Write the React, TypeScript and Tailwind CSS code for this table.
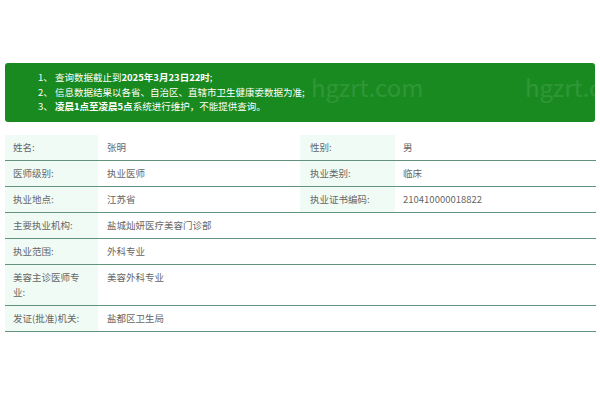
import React from 'react';

type Row = { label: string; value: string; label2?: string; value2?: string };

const rows: Row[] = [
  { label: '姓名:', value: '张明', label2: '性别:', value2: '男' },
  { label: '医师级别:', value: '执业医师', label2: '执业类别:', value2: '临床' },
  { label: '执业地点:', value: '江苏省', label2: '执业证书编码:', value2: '210410000018822' },
  { label: '主要执业机构:', value: '盐城灿妍医疗美容门诊部' },
  { label: '执业范围:', value: '外科专业' },
  { label: '美容主诊医师专业:', value: '美容外科专业' },
  { label: '发证(批准)机关:', value: '盐都区卫生局' },
];

const font = { fontFamily: '"Noto Sans CJK SC", "Noto Sans", sans-serif' };

const App: React.FC = () => {
  return (
    <div className="w-[600px] h-[400px] bg-white px-[5px] pt-[63px]" style={font}>
      <div className="relative overflow-hidden rounded-[3px] bg-[#188a20] pl-[33px] pt-[7px] pb-[8px] text-[9.5px] leading-[14.5px] text-white">
        {/* faint site watermark */}
        <div className="pointer-events-none absolute left-[306px] top-[8px] text-[24px] leading-[32px] text-white/10">hgzrt.com</div>
        <div className="pointer-events-none absolute left-[520px] top-[8px] text-[24px] leading-[32px] text-white/10">hgzrt.com</div>
        <p className="relative">1、&nbsp;查询数据截止到<b>2025年3月23日22时</b>;</p>
        <p className="relative">2、&nbsp;信息数据结果以各省、自治区、直辖市卫生健康委数据为准;</p>
        <p className="relative">3、&nbsp;<b>凌晨1点至凌晨5点</b>系统进行维护，不能提供查询。</p>
      </div>

      <table className="mt-[13px] w-[591px] table-fixed border-collapse text-[9.5px] leading-[15px] text-[#666]">
        <colgroup>
          <col className="w-[93px]" />
          <col className="w-[202px]" />
          <col className="w-[95px]" />
          <col className="w-[201px]" />
        </colgroup>
        <tbody>
          {rows.map((r) => (
            <tr key={r.label} className="border-b border-[#64937d]">
              <td className="bg-[#f1fbf5] pl-[8px] pr-[12px] py-[5px] align-top">{r.label}</td>
              {r.label2 ? (
                <>
                  <td className="px-[9px] py-[5px] align-top">{r.value}</td>
                  <td className="bg-[#f1fbf5] px-[10px] py-[5px] align-top">{r.label2}</td>
                  <td className="px-[8px] py-[5px] align-top">{r.value2}</td>
                </>
              ) : (
                <td colSpan={3} className="px-[9px] py-[5px] align-top">{r.value}</td>
              )}
            </tr>
          ))}
        </tbody>
      </table>
    </div>
  );
};

export default App;
